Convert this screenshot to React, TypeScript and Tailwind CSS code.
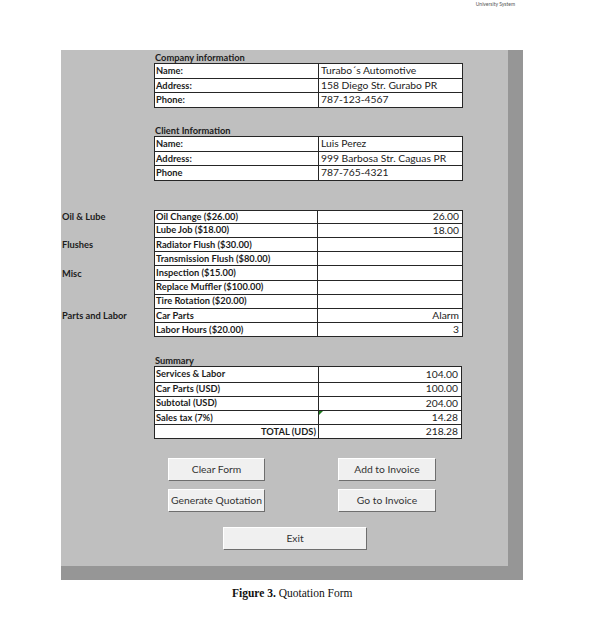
import React from 'react';

type Row = [string, string];

const company: Row[] = [
  ['Name:', 'Turabo´s Automotive'],
  ['Address:', '158 Diego Str. Gurabo PR'],
  ['Phone:', '787-123-4567'],
];

const client: Row[] = [
  ['Name:', 'Luis Perez'],
  ['Address:', '999 Barbosa Str. Caguas PR'],
  ['Phone', '787-765-4321'],
];

const services = [
  { group: 'Oil & Lube', name: 'Oil Change ($26.00)', value: '26.00' },
  { group: '', name: 'Lube Job ($18.00)', value: '18.00' },
  { group: 'Flushes', name: 'Radiator Flush ($30.00)', value: '' },
  { group: '', name: 'Transmission Flush ($80.00)', value: '' },
  { group: 'Misc', name: 'Inspection ($15.00)', value: '' },
  { group: '', name: 'Replace Muffler ($100.00)', value: '' },
  { group: '', name: 'Tire Rotation ($20.00)', value: '' },
  { group: 'Parts and Labor', name: 'Car Parts', value: 'Alarm' },
  { group: '', name: 'Labor Hours ($20.00)', value: '3' },
];

const summary: Row[] = [
  ['Services & Labor', '104.00'],
  ['Car Parts (USD)', '100.00'],
  ['Subtotal (USD)', '204.00'],
  ['Sales tax (7%)', '14.28'],
];

function InfoTable({ rows }: { rows: Row[] }) {
  return (
    <div className="w-[309px] border border-[#262626] bg-white">
      {rows.map(([label, value], i) => (
        <div key={label} className={`flex h-[14.2px] items-center ${i > 0 ? 'border-t border-[#262626]' : ''}`}>
          <div className="flex h-full w-[164px] items-center border-r border-[#262626] pl-[1px] text-[9.3px] font-bold text-[#1c1c1c]">
            {label}
          </div>
          <div className="flex h-full flex-1 items-center pl-[2px] text-[10.3px] text-[#1c1c1c]">{value}</div>
        </div>
      ))}
    </div>
  );
}

function Button({ label, width }: { label: string; width: string }) {
  return (
    <button
      className={`${width} h-[22px] whitespace-nowrap border-t border-l border-white bg-[#f0f0f0] text-[10.3px] text-[#333] shadow-[1px_1px_0_#6e6e6e]`}
    >
      {label}
    </button>
  );
}

export default function App() {
  return (
    <div className="h-[630px] w-[591px] bg-white font-['Lato',sans-serif]">
      <div className="flex justify-end pr-[76px] pt-[1px] text-[5px] leading-[6px] text-[#555]">University System</div>

      {/* drop shadow block with the form panel pulled up over it */}
      <div className="ml-[61px] mt-[56px] w-[462px] bg-[#969696] pb-[14px]">
        <div className="-mt-[13px] h-[516px] w-[447px] bg-[#bfbfbf] pt-[2px]">
          <div className="ml-[93px]">
            <div className="h-[11px] pl-[1px] text-[9.3px] font-bold leading-[11px] text-[#1c1c1c]">Company information</div>
            <InfoTable rows={company} />

            <div className="mt-[17.5px] h-[11px] pl-[1px] text-[9.3px] font-bold leading-[11px] text-[#1c1c1c]">
              Client Information
            </div>
            <InfoTable rows={client} />
          </div>

          <div className="mt-[29px] flex flex-col">
            {services.map((s, i) => (
              <div key={s.name} className="flex h-[14.2px]">
                <div className="flex w-[93px] items-center pl-[1px] text-[9.3px] font-bold text-[#1c1c1c]">{s.group}</div>
                <div
                  className={`flex w-[309px] border-x border-b border-[#262626] bg-white ${i === 0 ? 'border-t' : ''}`}
                >
                  <div className="flex w-[163px] items-center border-r border-[#262626] pl-[1px] text-[9.3px] font-bold text-[#1c1c1c]">
                    {s.name}
                  </div>
                  <div className="flex flex-1 items-center justify-end pr-[3px] text-[10.3px] text-[#1c1c1c]">{s.value}</div>
                </div>
              </div>
            ))}
          </div>

          <div className="ml-[93px] mt-[18px]">
            <div className="h-[11px] pl-[1px] text-[9.3px] font-bold leading-[11px] text-[#1c1c1c]">Summary</div>
            <div className="w-[308px] border border-[#262626] bg-white">
              {summary.map(([label, value], i) => (
                <div key={label} className={`flex h-[14.2px] ${i > 0 ? 'border-t border-[#262626]' : ''}`}>
                  <div className="flex w-[164px] items-center border-r border-[#262626] pl-[1px] text-[9.3px] font-bold text-[#1c1c1c]">
                    {label}
                  </div>
                  <div className="relative flex flex-1 items-center justify-end pr-[3px] text-[10.3px] text-[#1c1c1c]">
                    {i === 3 && (
                      <span className="absolute left-0 top-0 h-0 w-0 border-r-[4px] border-t-[4px] border-r-transparent border-t-[#1e7b1e]" />
                    )}
                    {value}
                  </div>
                </div>
              ))}
              <div className="flex h-[14.2px] border-t border-[#262626]">
                <div className="flex w-[164px] items-center justify-end border-r border-[#262626] pr-[2px] text-[9.3px] font-bold text-[#1c1c1c]">
                  TOTAL (UDS)
                </div>
                <div className="flex flex-1 items-center justify-end pr-[3px] text-[10.3px] text-[#1c1c1c]">218.28</div>
              </div>
            </div>
          </div>

          <div className="ml-[107px] mt-[19px] flex w-[267px] justify-between">
            <Button label="Clear Form" width="w-[96px]" />
            <Button label="Add to Invoice" width="w-[97px]" />
          </div>
          <div className="ml-[107px] mt-[9px] flex w-[267px] justify-between">
            <Button label="Generate Quotation" width="w-[96px]" />
            <Button label="Go to Invoice" width="w-[97px]" />
          </div>
          <div className="ml-[162px] mt-[16px] flex">
            <Button label="Exit" width="w-[143px]" />
          </div>
        </div>
      </div>

      <div className="mt-[6px] pl-[232px] font-['Liberation_Serif',serif] text-[11.5px] leading-[14px] text-[#111]">
        <span className="font-bold">Figure 3.</span> Quotation Form
      </div>
    </div>
  );
}
